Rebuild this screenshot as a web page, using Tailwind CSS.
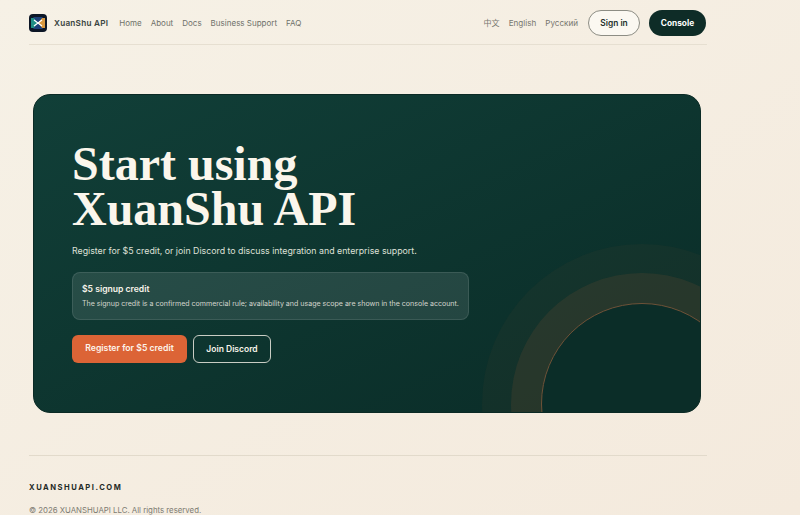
<!DOCTYPE html>
<html lang="en">
<head>
  <meta charset="UTF-8">
  <title>XuanShu API</title>
  <script src="https://cdn.jsdelivr.net/npm/@tailwindcss/browser@4"></script>
</head>
<body class="h-[515px] overflow-hidden bg-[#f4ebdf] bg-gradient-to-br from-[#f6f1e6] to-[#f4eadd] font-['Inter','Noto_Sans_CJK_SC',sans-serif] text-[#10231f]">
  <div class="ml-[29px] w-[678px]">
    <!-- Navigation Bar -->
    <nav class="flex h-[45px] items-center justify-between border-b border-[#e6dfd1] pt-[2px]">
      <div class="flex items-center">
        <svg class="h-[18px] w-[18px]" viewBox="0 0 18 18">
          <rect width="18" height="18" rx="4" fill="#0c1626"/>
          <path d="M2 4h6l1 5-1 5H2z" fill="#1f8f86"/>
          <path d="M16 4h-6L9 9l1 5h6z" fill="#d9983f"/>
          <path d="M4 3l5 6 5-6zM4 15l5-6 5 6z" fill="#1d3f78"/>
          <path d="M5 6l8 6M13 6l-8 6" stroke="#fff" stroke-width="1.2"/>
        </svg>
        <a class="ml-[7px] text-[8.2px] font-semibold tracking-[0.03em] text-[#38443f]">XuanShu API</a>
        <div class="ml-[11px] flex gap-[9px] text-[8px] text-[#6f716a]">
          <a>Home</a>
          <a>About</a>
          <a>Docs</a>
          <a>Business Support</a>
          <a>FAQ</a>
        </div>
      </div>
      <div class="flex items-center">
        <div class="flex gap-[9px] text-[8.1px] text-[#77776f]">
          <a>中文</a>
          <a>English</a>
          <a>Русский</a>
        </div>
        <button class="ml-[10px] h-[26px] w-[52px] rounded-full border border-[#8d8d84] bg-[#fbf8f1] text-[8.4px] font-semibold text-[#24302c]">Sign in</button>
        <button class="mr-[1px] ml-[9px] h-[26px] w-[57px] rounded-full bg-[#0e2c27] text-[8.3px] font-bold text-white">Console</button>
      </div>
    </nav>

    <!-- Hero -->
    <section class="relative mt-[49px] ml-[4px] h-[319px] w-[668px] overflow-hidden rounded-[17px] border border-[#0b2a25] bg-gradient-to-br from-[#113f38] to-[#0a2c27] pt-[46px] pl-[38px]">
      <div class="absolute top-[149px] left-[448px] h-[320px] w-[320px] rounded-full bg-[#d9683a]/4"></div>
      <div class="absolute top-[178px] left-[477px] h-[262px] w-[262px] rounded-full bg-[#d9683a]/10"></div>
      <div class="absolute top-[208px] left-[507px] h-[202px] w-[202px] rounded-full border border-[#6e5238] bg-[#0b2d28]"></div>
      <div class="relative">
        <h1 class="font-['Liberation_Serif',serif] text-[48px] leading-[45px] font-bold text-[#fbf6ec]">Start using<br>XuanShu API</h1>
        <p class="mt-[12px] text-[8.8px] leading-[16px] text-[#dfe0d8]">Register for $5 credit, or join Discord to discuss integration and enterprise support.</p>
        <div class="mt-[13px] h-[48px] w-[397px] rounded-[8px] border border-white/10 bg-white/10 px-[9px] pt-[9px]">
          <h2 class="text-[8.6px] leading-[14px] font-semibold text-[#f8f4ea]">$5 signup credit</h2>
          <p class="mt-[2px] text-[7.06px] leading-[12px] whitespace-nowrap text-[#d3d5cd]">The signup credit is a confirmed commercial rule; availability and usage scope are shown in the console account.</p>
        </div>
        <div class="mt-[15px] flex gap-[6px]">
          <button class="h-[28px] w-[115px] rounded-[6px] bg-[#dc6436] text-[8.7px] font-semibold text-[#fdf3ea]">Register for $5 credit</button>
          <button class="h-[28px] w-[78px] rounded-[6px] border border-[#c9cdc4] text-[8.5px] font-semibold text-[#f8f4ea]">Join Discord</button>
        </div>
      </div>
    </section>

    <!-- Footer -->
    <footer class="mt-[42px] border-t border-[#e2dacb] pt-[26px]">
      <p class="text-[7.6px] leading-[12px] font-bold tracking-[0.2em] text-[#1f2a26]">XUANSHUAPI.COM</p>
      <p class="mt-[10px] text-[7.8px] leading-[12px] text-[#7d7b72]">© 2026 XUANSHUAPI LLC. All rights reserved.</p>
    </footer>
  </div>
</body>
</html>
